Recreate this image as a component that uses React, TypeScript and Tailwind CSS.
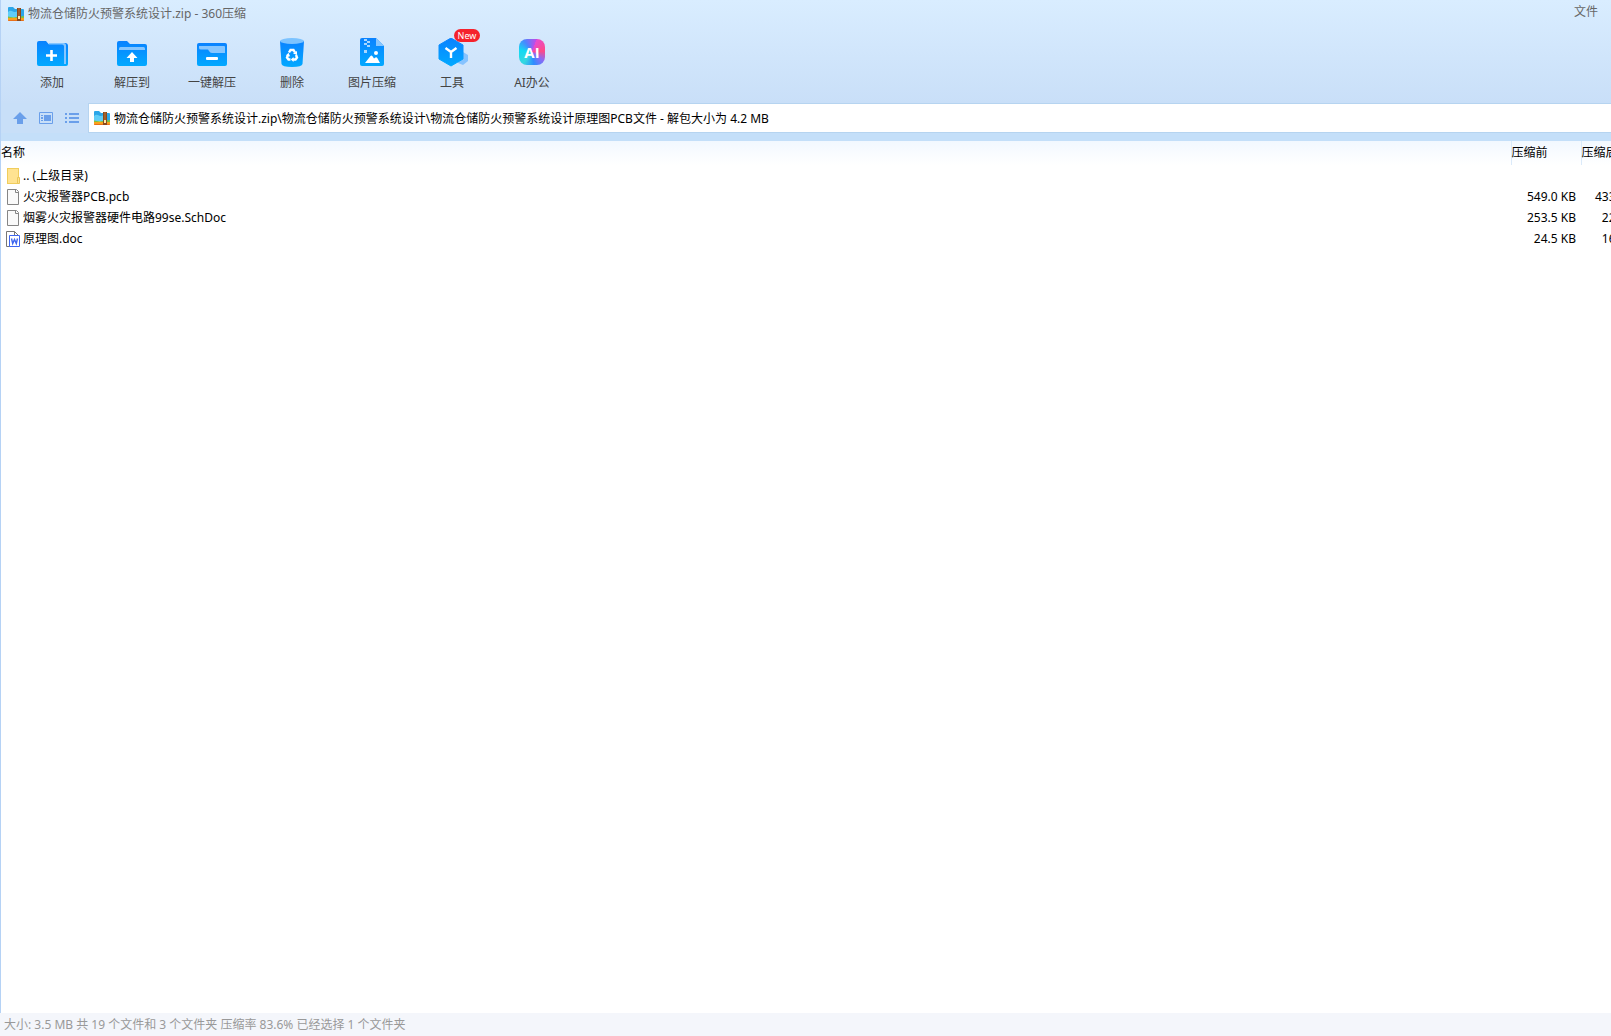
import React, { useState } from 'react';

interface Tool {
    label: string;
    icon: React.ReactNode;
    badge?: string;
}

interface FileEntry {
    name: string;
    kind: 'folder' | 'file' | 'doc';
    before?: string;
    after?: string;
}

const ZipIcon = () => (
    <svg className="w-4 h-4 shrink-0" viewBox="0 0 16 16" aria-hidden="true">
        <path d="M0 2Q0 1 1 1H5L7 3H15Q16 3 16 4V11H0Z" fill="#2ba6e8" />
        <path d="M0 11V6Q2 4 5 5.500Q8 7 11 4V11Z" fill="#5fcdf7" />
        <path d="M0 10.500Q6 12 16 10V12H0Z" fill="#7fc241" />
        <path d="M0 12H16V14Q16 15 15 15H1Q0 15 0 14Z" fill="#f9a01b" />
        <path d="M0 14H16Q16 15 15 15H1Q0 15 0 14Z" fill="#e8701a" />
        <path d="M9 2H13V15H9Z" fill="#8a4a1c" />
        <path d="M10.500 2H11.500V10H10.500Z" fill="#b9753a" />
        <path d="M10 10H12V13H10Z" fill="#ffe9a8" />
    </svg>
);

const BlueGradient = ({ id }: { id: string }) => (
    <defs>
        <linearGradient id={id} x1="0" y1="0" x2="0" y2="1">
            <stop offset="0" stopColor="#0a82ff" />
            <stop offset="1" stopColor="#02a9ff" />
        </linearGradient>
    </defs>
);

const AddIcon = () => (
    <svg className="w-8 h-8" viewBox="0 0 32 32" aria-hidden="true">
        <BlueGradient id="add" />
        <path d="M13 5H29Q32 5 32 8V26Q32 28 30 28H13Z" fill="url(#add)" />
        <path d="M13 5H27.500Q30 5 30 7.500V26H28V8H13Z" fill="#86c6ff" />
        <path d="M1 5Q1 3 3 3H10L13 6.500H26Q28 6.500 28 8.500V28H3Q1 28 1 26Z" fill="url(#add)" />
        <path d="M15.500 12V23M10 17.500H21" stroke="#fff" strokeWidth="2.600" />
    </svg>
);

const ExtractIcon = () => (
    <svg className="w-8 h-8" viewBox="0 0 32 32" aria-hidden="true">
        <BlueGradient id="extract" />
        <path d="M1 5Q1 3 3 3H11L14 6H29Q31 6 31 8V26Q31 28 29 28H3Q1 28 1 26Z" fill="url(#extract)" />
        <path d="M3 10.500Q3 9 4.500 9H27.500Q29 9 29 10.500V12H3Z" fill="#86c6ff" />
        <path d="M16 14L21.500 20H18V24H14V20H10.500Z" fill="#fff" />
    </svg>
);

const OneClickIcon = () => (
    <svg className="w-8 h-8" viewBox="0 0 32 32" aria-hidden="true">
        <BlueGradient id="oneclick" />
        <rect x="1" y="5" width="30" height="23" rx="2" fill="url(#oneclick)" />
        <path d="M3 8H28Q29 8 29 9V15H16Q14 15 13 13L12 11.500H5Q3 11.500 3 10Z" fill="#86c6ff" />
        <rect x="10" y="19" width="12" height="3" rx="1" fill="#fff" />
    </svg>
);

const DeleteIcon = () => (
    <svg className="w-8 h-8" viewBox="0 0 32 32" aria-hidden="true">
        <BlueGradient id="delete" />
        <path d="M4 3L5.500 26Q6 29 16 29T26.500 26L28 3Z" fill="url(#delete)" />
        <ellipse cx="16" cy="3" rx="12" ry="3" fill="#7cc3ff" />
        <g fill="none" stroke="#fff" strokeWidth="2.400">
            <path d="M13 14.500L14.500 12H17.500L19 14.500" />
            <path d="M20 17L21 19.500L19.500 21.500H17" />
            <path d="M14.500 21.500H12.500L11 19.500L12 17" />
        </g>
        <path d="M17 15.500L21 13V17ZM17.500 19V24L14.800 21.500ZM10 17.500L12.500 14.800L14.200 18.500Z" fill="#fff" />
    </svg>
);

const ImageIcon = () => (
    <svg className="w-8 h-8" viewBox="0 0 32 32" aria-hidden="true">
        <BlueGradient id="image" />
        <path d="M4 2Q4 0 6 0H20L28 8V26Q28 28 26 28H6Q4 28 4 26Z" fill="url(#image)" />
        <path d="M20 0L28 8H20Z" fill="#86c6ff" />
        <path d="M8 1H11V3H8ZM11 3H14V5H11ZM8 5H11V7H8ZM11 7H14V9H11ZM8 12H11V15H8Z" fill="#a9d7ff" />
        <circle cx="20" cy="15" r="2" fill="#fff" />
        <path d="M9 25L14.500 18Q15.500 17 16.500 18.200L18 20.500L19.500 19.500Q20.500 19 21.300 20L24 25Z" fill="#fff" />
    </svg>
);

const ToolsIcon = () => (
    <svg className="w-8 h-8" viewBox="0 0 32 32" aria-hidden="true">
        <BlueGradient id="tools" />
        <path d="M27 14L32 17V23L27 27L22 25V17Z" fill="#86c3ff" />
        <path d="M15 0L27 7V21L15 28L3 21V7Z" fill="url(#tools)" stroke="url(#tools)" strokeLinejoin="round" />
        <path d="M9.500 10L15 14L20.500 10M15 14V20" fill="none" stroke="#fff" strokeWidth="2.400" />
    </svg>
);

const AiIcon = () => (
    <span className="flex w-8 h-8 items-start justify-center pt-px">
        <span className="flex size-[26px] items-center justify-center rounded-lg bg-[conic-gradient(from_20deg,#e64bd0,#ff4a86_18%,#8a6cf5_30%,#2d8cff_42%,#35d8e0_55%,#12d9f2_72%,#4b86ff_85%,#c04be8)] font-['Open_Sans',sans-serif] text-[15px] font-bold text-white">
            AI
        </span>
    </span>
);

const UpIcon = () => (
    <svg className="w-4 h-4" viewBox="0 0 16 16" aria-hidden="true">
        <path d="M8 2L15 9H11V14H5V9H1Z" fill="#6a9fea" />
    </svg>
);

const PreviewIcon = () => (
    <svg className="w-4 h-4" viewBox="0 0 16 16" aria-hidden="true">
        <path d="M1.500 2.500H14.500V13.500H1.500Z" fill="none" stroke="#6a9fea" />
        <path d="M6 5H13V11H6ZM3 5H5V6H3ZM3 7H5V9H3ZM3 10H5V11H3Z" fill="#6a9fea" />
    </svg>
);

const ListIcon = () => (
    <svg className="w-4 h-4" viewBox="0 0 16 16" aria-hidden="true">
        <path d="M1 3H3V5H1ZM5 3H15V5H5ZM1 7H3V9H1ZM5 7H15V9H5ZM1 11H3V13H1ZM5 11H15V13H5Z" fill="#6a9fea" />
    </svg>
);

const EntryIcon = ({ kind }: { kind: FileEntry['kind'] }) => {
    if (kind === 'folder') {
        return (
            <svg className="w-4 h-4 shrink-0" viewBox="0 0 16 16" aria-hidden="true">
                <path d="M1 0H13V16H1Z" fill="#f0cd5c" />
                <path d="M2 1H12V15H2Z" fill="#ffe391" />
                <path d="M11.500 9.500H13.500V15.500H11.500Z" fill="#ffe391" stroke="#eac75a" />
            </svg>
        );
    }
    if (kind === 'doc') {
        return (
            <svg className="w-4 h-4 shrink-0" viewBox="0 0 16 16" aria-hidden="true">
                <path d="M0.500 0.500H8.500L12.500 4.500V15.500H0.500Z" fill="#fff" stroke="#777" />
                <path d="M8.500 0.500V4.500H12.500" fill="none" stroke="#777" />
                <path d="M3.500 4.500H13.500V15.500H3.500Z" fill="#fff" stroke="#3f66f0" />
                <path d="M5.500 7.500L6.700 12.500L8.500 8.500L10.300 12.500L11.500 7.500" fill="none" stroke="#3f66f0" strokeWidth="1.400" />
            </svg>
        );
    }
    return (
        <svg className="w-4 h-4 shrink-0" viewBox="0 0 16 16" aria-hidden="true">
            <path d="M1.500 0.500H10.500L12.500 2.500V15.500H1.500Z" fill="#fafafa" stroke="#858585" />
            <path d="M9.500 0.500V3.500H12.500" fill="none" stroke="#858585" />
        </svg>
    );
};

const tools: Tool[] = [
    { label: '添加', icon: <AddIcon /> },
    { label: '解压到', icon: <ExtractIcon /> },
    { label: '一键解压', icon: <OneClickIcon /> },
    { label: '删除', icon: <DeleteIcon /> },
    { label: '图片压缩', icon: <ImageIcon /> },
    { label: '工具', icon: <ToolsIcon />, badge: 'New' },
    { label: 'AI办公', icon: <AiIcon /> },
];

const entries: FileEntry[] = [
    { name: '.. (上级目录)', kind: 'folder' },
    { name: '火灾报警器PCB.pcb', kind: 'file', before: '549.0 KB', after: '433.0 KB' },
    { name: '烟雾火灾报警器硬件电路99se.SchDoc', kind: 'file', before: '253.5 KB', after: '22.0 KB' },
    { name: '原理图.doc', kind: 'doc', before: '24.5 KB', after: '16.0 KB' },
];

export default function App() {
    const [path, setPath] = useState(
        '物流仓储防火预警系统设计.zip\\物流仓储防火预警系统设计\\物流仓储防火预警系统设计原理图PCB文件 - 解包大小为 4.2 MB'
    );

    return (
        <div className="flex min-h-screen flex-col overflow-hidden bg-white font-['Noto_Sans','Noto_Sans_CJK_SC',sans-serif] text-xs text-black">
            {/* Title bar and toolbar */}
            <header className="border-l border-[#b5d2f5] bg-linear-to-b from-[#d9edff] to-[#c9dff8]">
                <div className="flex h-7 items-center justify-between pr-[13px] pl-[7px] text-[#666]">
                    <h1 className="flex items-center gap-1">
                        <ZipIcon />
                        物流仓储防火预警系统设计.zip - 360压缩
                    </h1>
                    <button type="button" className="pb-1">文件</button>
                </div>
                <nav className="flex h-[75px] pt-[10px] pl-[11px]">
                    {tools.map((tool) => (
                        <button
                            key={tool.label}
                            type="button"
                            className="relative flex w-20 flex-col items-center gap-[5px] text-[#444]"
                        >
                            {tool.icon}
                            <span>{tool.label}</span>
                            {tool.badge && (
                                <span className="absolute -top-[9px] left-[42px] flex h-[13px] w-[26px] items-center justify-center rounded-full bg-[#f5222d] text-[9px] text-white">
                                    {tool.badge}
                                </span>
                            )}
                        </button>
                    ))}
                </nav>
            </header>

            {/* Address bar */}
            <div className="flex h-[38px] border-l border-[#b5d2f5] bg-[#c4dff9] pb-2">
                <div className="flex w-[87px] items-center gap-[10px] bg-[#c8dff8] pl-[11px]">
                    <button type="button" aria-label="向上"><UpIcon /></button>
                    <button type="button" aria-label="预览"><PreviewIcon /></button>
                    <button type="button" aria-label="列表"><ListIcon /></button>
                </div>
                <label className="flex flex-1 items-center gap-1 border-y border-l border-[#b6d4f0] bg-white pl-[5px]">
                    <ZipIcon />
                    <input
                        type="text"
                        aria-label="路径"
                        className="min-w-0 flex-1 pt-0.5 outline-none"
                        value={path}
                        onChange={(e) => setPath(e.target.value)}
                    />
                </label>
            </div>

            {/* File list, the last column runs past the window edge */}
            <main className="flex-1 overflow-hidden border-l border-[#b5d2f5]">
                <table className="w-[calc(100%+42px)] table-fixed border-collapse">
                    <thead>
                        <tr className="h-6 bg-linear-to-b from-[#f2f8ff] to-white text-left">
                            <th className="p-0 font-normal">名称</th>
                            <th className="w-[70px] border-l border-[#dbeafa] p-0 font-normal">压缩前</th>
                            <th className="w-[72px] border-l border-[#dbeafa] p-0 font-normal">压缩后</th>
                        </tr>
                    </thead>
                    <tbody>
                        {entries.map((entry) => (
                            <tr key={entry.name} className="h-[21px]">
                                <td className="p-0 pl-[5px]">
                                    <span className="flex items-center gap-px">
                                        <EntryIcon kind={entry.kind} />
                                        {entry.name}
                                    </span>
                                </td>
                                <td className="p-0 pr-[5px] text-right">{entry.before}</td>
                                <td className="p-0 pr-[9px] text-right">{entry.after}</td>
                            </tr>
                        ))}
                    </tbody>
                </table>
            </main>

            <footer className="flex h-[23px] items-center bg-[#f4f6fb] pl-1 text-[#999]">
                大小: 3.5 MB 共 19 个文件和 3 个文件夹 压缩率 83.6% 已经选择 1 个文件夹
            </footer>
        </div>
    );
}
